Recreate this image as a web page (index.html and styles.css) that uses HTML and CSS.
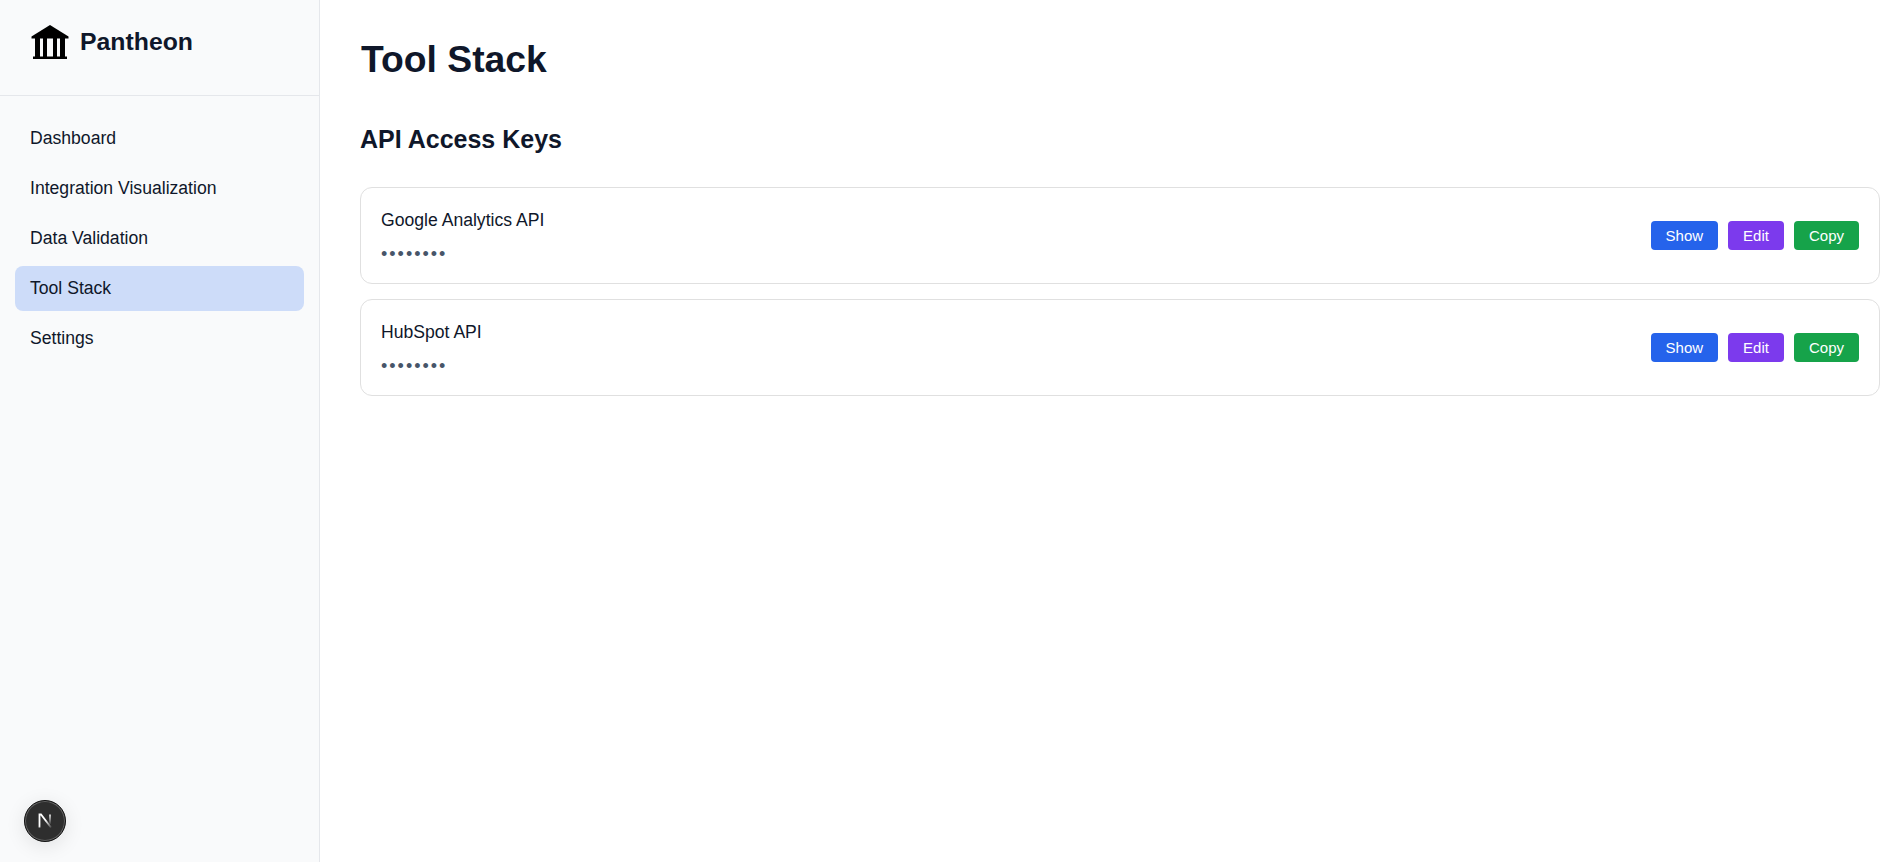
FILE: index.html
```html
<!DOCTYPE html>
<html lang="en">
  <head>
    <meta charset="UTF-8" />
    <meta name="viewport" content="width=device-width, initial-scale=1.0" />
    <title>Tool Stack</title>
    <link rel="stylesheet" href="styles.css">
  </head>
  <body>
    <aside class="sidebar">
      <div class="brand">
        <svg class="brand-icon" viewBox="0 0 38 34" width="38" height="34" aria-hidden="true">
          <path d="M19 0 37.5 11.5V13.5H.5V11.5Z" />
          <rect x="4" y="13" width="5" height="19" />
          <rect x="12" y="13" width="4" height="19" />
          <rect x="22" y="13" width="4" height="19" />
          <rect x="29" y="13" width="5" height="19" />
          <rect x="2" y="31.5" width="34" height="2.5" />
        </svg>
        <span class="brand-name">Pantheon</span>
      </div>
      <nav class="nav">
        <a class="nav-item" href="#">Dashboard</a>
        <a class="nav-item" href="#">Integration Visualization</a>
        <a class="nav-item" href="#">Data Validation</a>
        <a class="nav-item active" href="#">Tool Stack</a>
        <a class="nav-item" href="#">Settings</a>
      </nav>
    </aside>

    <main class="content">
      <h1>Tool Stack</h1>
      <h2>API Access Keys</h2>
      <div class="key-list">
        <div class="key-card">
          <div class="key-info">
            <div class="key-name">Google Analytics API</div>
            <div class="key-value">••••••••</div>
          </div>
          <div class="key-actions">
            <button class="btn btn-blue">Show</button>
            <button class="btn btn-purple">Edit</button>
            <button class="btn btn-green">Copy</button>
          </div>
        </div>
        <div class="key-card">
          <div class="key-info">
            <div class="key-name">HubSpot API</div>
            <div class="key-value">••••••••</div>
          </div>
          <div class="key-actions">
            <button class="btn btn-blue">Show</button>
            <button class="btn btn-purple">Edit</button>
            <button class="btn btn-green">Copy</button>
          </div>
        </div>
      </div>
    </main>

    <div class="dev-badge">
      <svg viewBox="0 0 18 18" width="18" height="18" aria-hidden="true">
        <defs>
          <linearGradient id="fade-diag" gradientUnits="userSpaceOnUse" x1="4" y1="3" x2="15" y2="16">
            <stop offset="0.45" stop-color="#fff" />
            <stop offset="1" stop-color="#fff" stop-opacity="0.1" />
          </linearGradient>
          <linearGradient id="fade-right" gradientUnits="userSpaceOnUse" x1="14" y1="3" x2="14" y2="12">
            <stop offset="0" stop-color="#fff" />
            <stop offset="1" stop-color="#fff" stop-opacity="0.1" />
          </linearGradient>
        </defs>
        <path d="M3.5 15.5V2.5H5L15 15.5" fill="none" stroke="url(#fade-diag)" stroke-width="1.8" />
        <path d="M14 2.5V12" fill="none" stroke="url(#fade-right)" stroke-width="1.5" />
      </svg>
    </div>
  </body>
</html>
```

FILE: styles.css
```css
* {
  box-sizing: border-box;
}

body {
  font-family: "Liberation Sans", Arial, sans-serif;
  display: flex;
  height: 100vh;
  margin: 0;
  background-color: #ffffff;
  color: #0f172a;
  overflow: hidden;
}

.sidebar {
  flex: 0 0 320px;
  background-color: #f9fafb;
  border-right: 1px solid #e5e7eb;
}

.brand {
  display: flex;
  align-items: center;
  gap: 11px;
  height: 96px;
  padding: 0 31px 11px;
  border-bottom: 1px solid #e5e7eb;
}

.brand-icon {
  fill: #000000;
  flex: none;
}

.brand-name {
  font-size: 24.8px;
  font-weight: bold;
}

.nav {
  display: flex;
  flex-direction: column;
  gap: 5px;
  padding: 20px 15px 0;
}

.nav-item {
  display: block;
  padding: 12px 15px;
  height: 45px;
  border-radius: 8px;
  color: #0f172a;
  font-size: 17.6px;
  line-height: 20px;
  text-decoration: none;
}

.nav-item.active {
  background-color: #cddcf9;
}

.content {
  flex: 1;
  padding: 38px 17px 0 40px;
}

h1 {
  margin: 0 0 0 1px;
  font-size: 37.3px;
  line-height: 42px;
}

h2 {
  margin: 45px 0 0;
  font-size: 25px;
  line-height: 28px;
}

.key-list {
  display: flex;
  flex-direction: column;
  gap: 15px;
  margin-top: 34px;
}

.key-card {
  display: flex;
  justify-content: space-between;
  align-items: center;
  height: 97px;
  padding: 0 20px;
  border: 1px solid #e0e0e0;
  border-radius: 12px;
}

.key-info {
  padding-top: 3px;
}

.key-name {
  font-size: 17.6px;
  line-height: 20px;
}

.key-value {
  margin-top: 14px;
  color: #475569;
  font-size: 18px;
  line-height: 20px;
  letter-spacing: 2px;
}

.key-actions {
  display: flex;
  gap: 10px;
}

.btn {
  height: 29px;
  padding: 0 15px;
  border: none;
  border-radius: 4px;
  color: #ffffff;
  font-family: inherit;
  font-size: 15px;
}

.btn-blue {
  background-color: #2563eb;
}

.btn-purple {
  background-color: #7c3aed;
}

.btn-green {
  background-color: #16a34a;
}

.dev-badge {
  position: fixed;
  left: 24px;
  bottom: 20px;
  display: flex;
  align-items: center;
  justify-content: center;
  width: 42px;
  height: 42px;
  border-radius: 50%;
  background-color: #2e2e2e;
  border: 1px solid #111111;
  box-shadow: 0 0 0 1px rgba(255, 255, 255, 0.25) inset, 0 4px 20px rgba(0, 0, 0, 0.1);
}
```
